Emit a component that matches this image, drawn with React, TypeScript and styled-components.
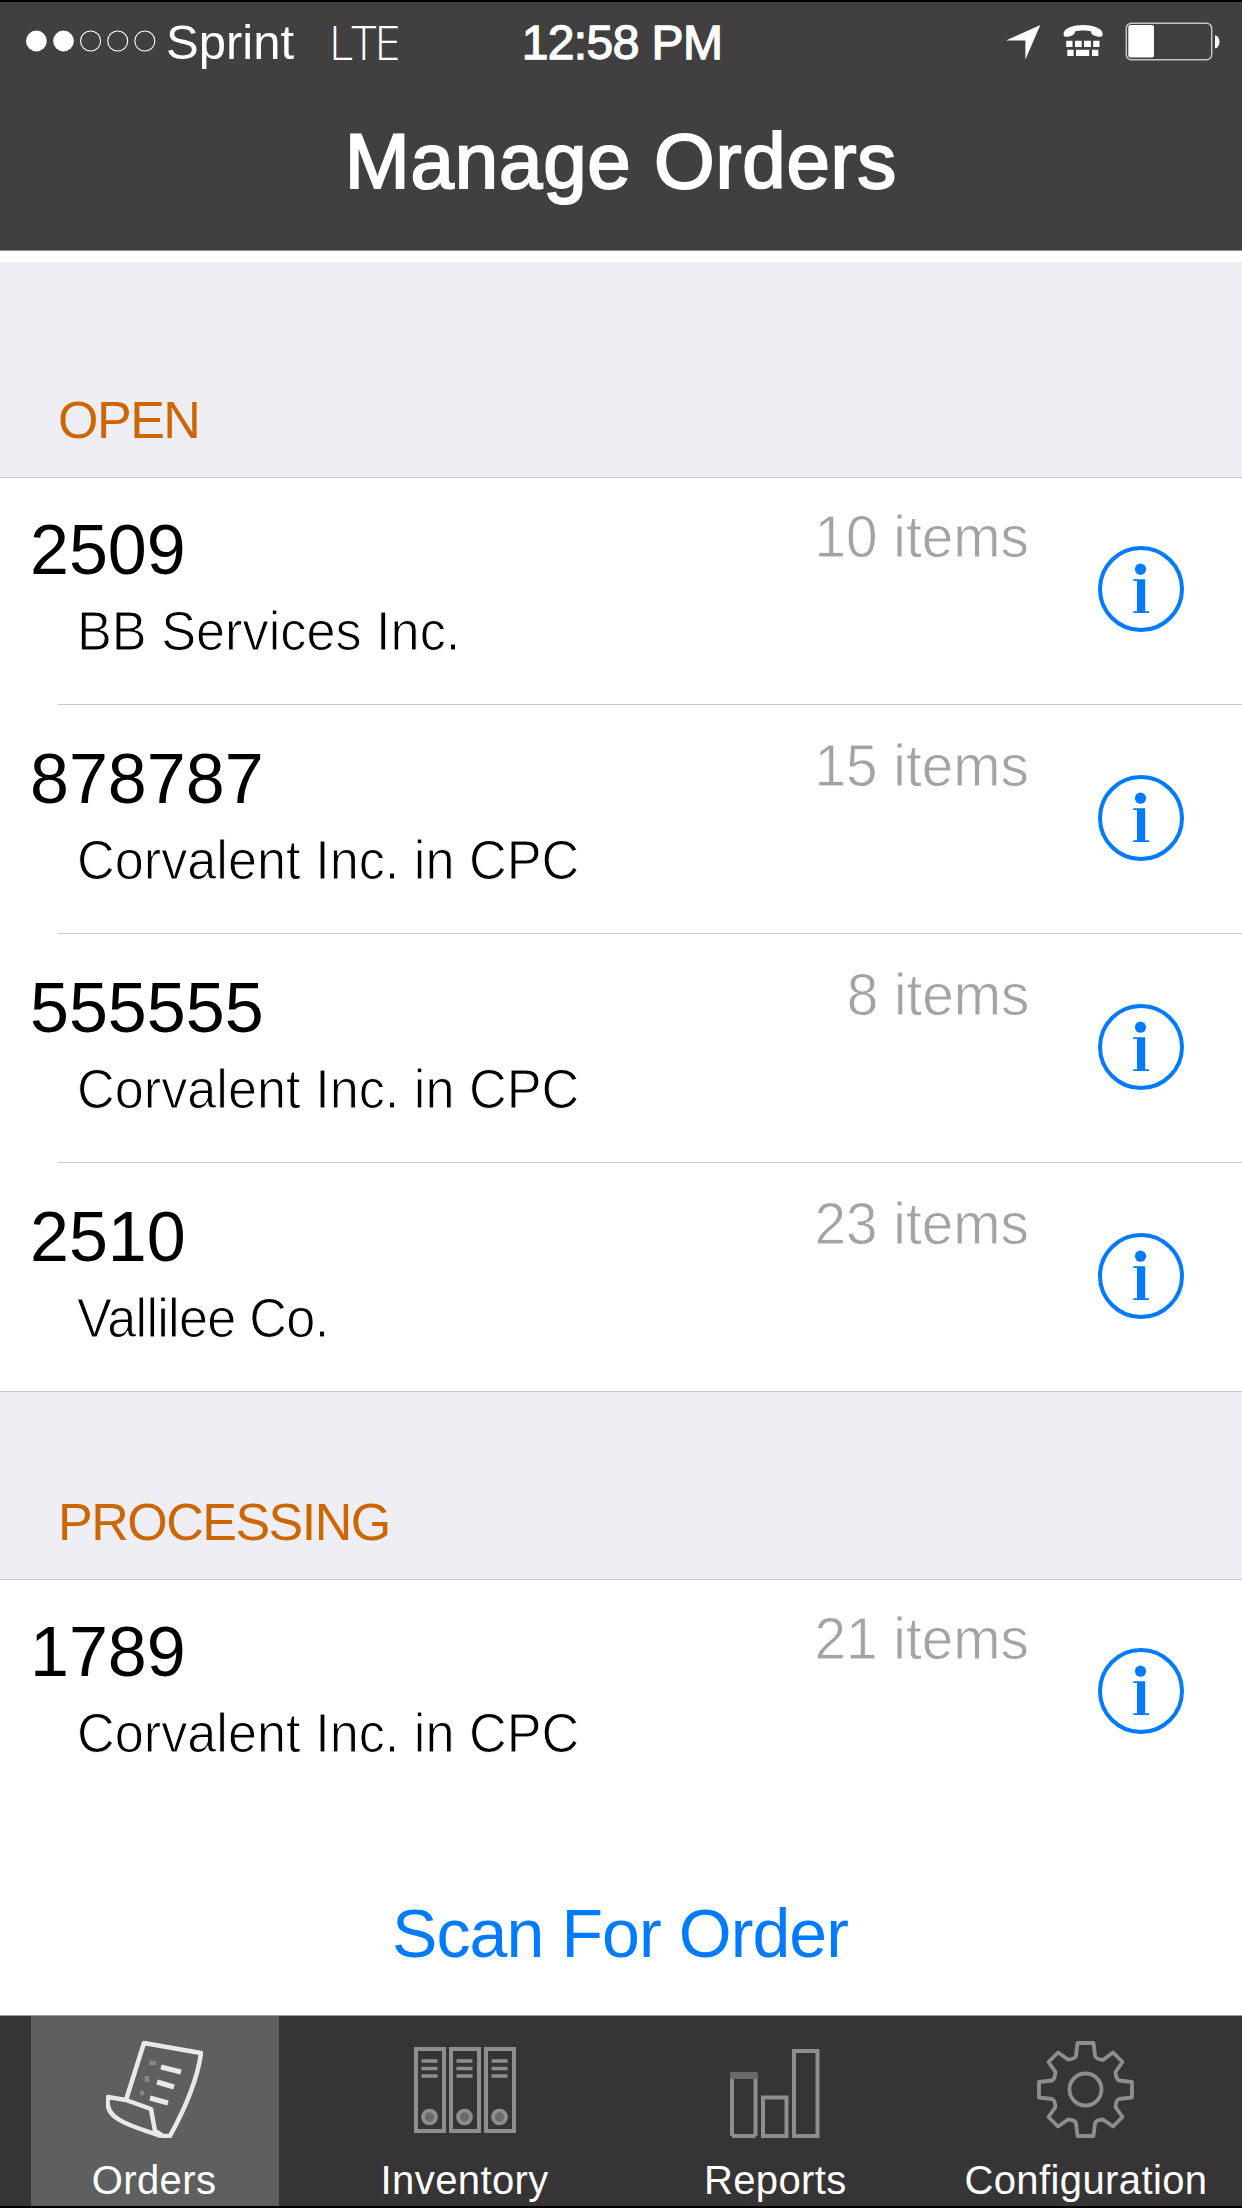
import React from "react";
import styled, { createGlobalStyle } from "styled-components";

const Global = createGlobalStyle`
  * { box-sizing: border-box; }
  body { margin: 0; background: #fff; font-family: "Liberation Sans", Arial, sans-serif; font-variant-ligatures: none; }
`;

const Screen = styled.div`
  width: 1242px;
  height: 2208px;
  display: flex;
  flex-direction: column;
  background: #fff;
  overflow: hidden;
`;

const Header = styled.header`
  height: 251px;
  flex: none;
  background: #413f40;
  border-top: 2px solid #000;
  border-bottom: 1px solid #8e8d8d;
  color: #fff;
`;

const StatusBar = styled.div`
  height: 78px;
  display: grid;
  grid-template-columns: 1fr auto 1fr;
  align-items: center;
  padding: 0 22px 0 24px;
`;

const StatusGroup = styled.div<{ $end?: boolean }>`
  display: flex;
  align-items: center;
  justify-content: ${(p) => (p.$end ? "flex-end" : "flex-start")};
`;

const Carrier = styled.span`
  font-size: 49px;
  line-height: 56px;
  margin-left: 10px;
  padding-top: 2px;
`;

const Network = styled.span`
  font-family: "Open Sans", sans-serif;
  font-weight: 300;
  font-size: 47px;
  line-height: 56px;
  letter-spacing: -1.6px;
  margin-left: 35px;
  padding-top: 2px;
`;

const Clock = styled.span`
  font-size: 48px;
  line-height: 56px;
  letter-spacing: -0.6px;
  padding-top: 3px;
  -webkit-text-stroke: 1.3px #fff;
`;

const Title = styled.h1`
  margin: 36px 0 0;
  font-size: 78px;
  line-height: 90px;
  font-weight: 400;
  letter-spacing: 0.8px;
  text-align: center;
  -webkit-text-stroke: 2px #fff;
`;

const List = styled.main`
  flex: 1;
  padding-top: 11px;
`;

const SectionHeader = styled.h2<{ $height: number }>`
  margin: 0;
  height: ${(p) => p.$height}px;
  display: flex;
  align-items: flex-end;
  padding: 0 58px 27px;
  background: #efeef4;
  border-bottom: 1px solid #c8c7cc;
  color: #cc6600;
  font-size: 52px;
  line-height: 60px;
  font-weight: 400;
  letter-spacing: -1.5px;
`;

const Row = styled.div<{ $first?: boolean }>`
  height: ${(p) => (p.$first ? 227 : 229)}px;
  display: flex;
  justify-content: space-between;
  padding: ${(p) => (p.$first ? 29 : 31)}px 57px 0 30px;
`;

const Divider = styled.hr<{ $inset?: boolean }>`
  height: 1px;
  border: 0;
  margin: -1px 0 0 ${(p) => (p.$inset ? 58 : 0)}px;
  background: #c8c7cc;
`;

const OrderText = styled.div`
  display: flex;
  flex-direction: column;
  padding-top: 2px;
`;

const OrderNumber = styled.div`
  font-size: 70px;
  line-height: 82px;
  color: #000;
`;

const Customer = styled.div<{ $tracking?: number }>`
  margin-top: 2px;
  padding-left: 47px;
  font-size: 56px;
  line-height: 76px;
  letter-spacing: ${(p) => p.$tracking ?? 0}px;
  white-space: nowrap;
  transform: scaleX(0.933);
  transform-origin: 47px 0;
  color: #000;
  -webkit-text-stroke: 1px #fff;
`;

const RowEnd = styled.div`
  display: flex;
  gap: 69px;
`;

const ItemCount = styled.div`
  font-size: 60px;
  line-height: 60px;
  transform: scaleX(0.945);
  transform-origin: right top;
  color: #a3a3a3;
  -webkit-text-stroke: 0.8px #fff;
`;

const InfoButton = styled.button`
  width: 87px;
  height: 87px;
  margin-top: 39px;
  padding: 0;
  border: 0;
  background: none;
  svg { display: block; }
`;

const ScanButton = styled.button`
  flex: none;
  height: 160px;
  border: 0;
  padding: 0 2px 5px 0;
  background: #fff;
  color: #007aff;
  font: 400 68px/76px "Liberation Sans", Arial, sans-serif;
  letter-spacing: -0.9px;
`;

const TabBar = styled.nav`
  flex: none;
  height: 193px;
  display: flex;
  justify-content: space-between;
  padding: 0 31px;
  background: #363435;
  border-top: 1px solid #9a9b9b;
  border-bottom: 2px solid #000;
`;

const Tab = styled.div<{ $active?: boolean }>`
  width: 248px;
  display: flex;
  flex-direction: column;
  align-items: center;
  padding: 25px 2px 0 0;
  background: ${(p) => (p.$active ? "#5f5f5f" : "transparent")};
  color: ${(p) => (p.$active ? "#e9e9e9" : "#8e8e8e")};
  svg { display: block; }
`;

const TabLabel = styled.span`
  margin-top: 19px;
  font-size: 40px;
  line-height: 46px;
  letter-spacing: 0.4px;
  color: #fff;
`;

const SignalDots = () => (
  <svg width="132" height="24" viewBox="0 0 132 24" fill="none" stroke="#fff">
    {[0, 1, 2, 3, 4].map((i) => (
      <circle key={i} cx={12.4 + i * 27.1} cy="12" r={i < 2 ? 10.4 : 10} fill={i < 2 ? "#fff" : "none"} strokeWidth={i < 2 ? 0 : 1.1} />
    ))}
  </svg>
);

const StatusIcons = () => (
  <svg width="216" height="44" viewBox="1004 19 216 44" fill="#fff">
    <path d="M1040.300 25 1025.400 59.500V40.600L1006 40.400Z" />
    <path d="M1063.500 34C1063.500 28 1074 25 1083 25S1102.700 28 1102.700 34C1102.700 37 1100 37.300 1096.500 36.200 1093 35.200 1091.300 34.500 1091 31.400 1087 30.300 1079 30.300 1075 31.400 1074.700 34.500 1073 35.200 1069.700 36.200 1066 37.300 1063.500 37 1063.500 34Z" />
    <path d="M1066.200 40.700h6.300v6.300h-6.300zM1075 40.700h6.700v6.300h-6.700zM1084 40.700h6.900v6.300h-6.900zM1093.200 40.700h6.300v6.300h-6.300zM1067.300 49.700h6.300v6.300h-6.300zM1076 49.700h13.200v6.300h-13.200zM1092 49.700h6.300v6.300h-6.300z" />
    <rect x="1126.300" y="23.200" width="85.400" height="36.500" rx="5" fill="none" stroke="#c6c5c5" strokeWidth="1.500" />
    <rect x="1128.300" y="25" width="25.700" height="32.500" rx="2" />
    <path d="M1215 35.300c6 1.500 6 11.700 0 13.200z" />
  </svg>
);

const InfoIcon = () => (
  <svg width="87" height="87" viewBox="0 0 87 87" fill="#007aff">
    <circle cx="43" cy="43" r="41" fill="none" stroke="#007aff" strokeWidth="4" />
    <circle cx="42.500" cy="23.200" r="5.600" />
    <path d="M35.300 33.300H47.200V65.300H51V67H35.300V65.300H39V35H35.300Z" />
  </svg>
);

const OrdersIcon = () => (
  <svg width="97" height="97" viewBox="0 0 97 97" fill="none" stroke="currentColor" strokeWidth="4.500" strokeLinejoin="round">
    <path d="M20 59 38 2 95 12C91 42 76 73 64 95H55M20 59 2 56C0 66 4 73 12 78 24 86 42 90 55 95M20 59 45 68 49 90 57 95" />
    <path d="M55 26 75 31M51 41 68 46M44 57 62 62" strokeWidth="5" />
    <path d="M43 22h7M41 35v6M34 52h4" opacity=".28" />
  </svg>
);

const InventoryIcon = () => (
  <svg width="104" height="97" viewBox="0 0 104 97" fill="none" stroke="currentColor" strokeWidth="4">
    {[0, 35, 70].map((x) => (
      <g key={x} transform={`translate(${x} 0)`}>
        <rect x="3" y="8" width="28" height="82" />
        <path d="M8.500 20h16M8.500 27.500h16M8.500 35h16" strokeWidth="3.700" />
        <circle cx="16.500" cy="76" r="6.500" fill="#6b6a6a" strokeWidth="3.700" />
      </g>
    ))}
  </svg>
);

const ReportsIcon = () => (
  <svg width="92" height="97" viewBox="0 0 92 97" fill="none" stroke="currentColor" strokeWidth="4">
    <path d="M3 95V35M26.500 35V95M3 95H26.500M34 95V56.500H57.500V95ZM65 95V10H88.500V95Z" />
    <path d="M1 34.500H28.500" stroke="#6b6a6a" strokeWidth="7" />
  </svg>
);

const GearIcon = () => (
  <svg width="97" height="97" viewBox="0 0 97 97" fill="none" stroke="currentColor" strokeWidth="3.800" strokeLinejoin="round">
    <circle cx="48.500" cy="48.500" r="16" />
    <path d="M40.500 2H56.500L58 15Q59 18 66 19L76 11.500 85.500 21 78.500 31Q79 38 82 39.500L95 41V56.500L82 58Q79 59 78.500 66L85.500 76 76 85.500 66 78.500Q59 79 58 82L56.500 95H40.500L39 82Q38 79 31 78.500L21 85.500 11.500 76 18.500 66Q18 59 15 58L2 56.500V41L15 39.500Q18 38 18.500 31L11.500 21 21 11.500 31 18.500Q38 18 39 15Z" />
  </svg>
);

type Order = { id: string; customer: string; items: number; tracking?: number };

const sections: { title: string; height: number; orders: Order[] }[] = [
  {
    title: "OPEN",
    height: 216,
    orders: [
      { id: "2509", customer: "BB Services Inc.", items: 10 },
      { id: "878787", customer: "Corvalent Inc. in CPC", items: 15 },
      { id: "555555", customer: "Corvalent Inc. in CPC", items: 8 },
      { id: "2510", customer: "Vallilee Co.", items: 23, tracking: -0.8 },
    ],
  },
  {
    title: "PROCESSING",
    height: 188,
    orders: [{ id: "1789", customer: "Corvalent Inc. in CPC", items: 21 }],
  },
];

const tabs = [
  { label: "Orders", Icon: OrdersIcon },
  { label: "Inventory", Icon: InventoryIcon },
  { label: "Reports", Icon: ReportsIcon },
  { label: "Configuration", Icon: GearIcon },
];

export default function App() {
  return (
    <Screen>
      <Global />
      <Header>
        <StatusBar>
          <StatusGroup>
            <SignalDots />
            <Carrier>Sprint</Carrier>
            <Network>LTE</Network>
          </StatusGroup>
          <Clock>12:58 PM</Clock>
          <StatusGroup $end>
            <StatusIcons />
          </StatusGroup>
        </StatusBar>
        <Title>Manage Orders</Title>
      </Header>
      <List>
        {sections.map((section, s) => (
          <section key={section.title}>
            <SectionHeader $height={section.height}>{section.title}</SectionHeader>
            {section.orders.map((order, i) => {
              const last = i === section.orders.length - 1;
              return (
                <React.Fragment key={order.id}>
                  <Row $first={i === 0}>
                    <OrderText>
                      <OrderNumber>{order.id}</OrderNumber>
                      <Customer $tracking={order.tracking}>{order.customer}</Customer>
                    </OrderText>
                    <RowEnd>
                      <ItemCount>{order.items} items</ItemCount>
                      <InfoButton aria-label="Order details">
                        <InfoIcon />
                      </InfoButton>
                    </RowEnd>
                  </Row>
                  {(!last || s < sections.length - 1) && <Divider $inset={!last} />}
                </React.Fragment>
              );
            })}
          </section>
        ))}
      </List>
      <ScanButton>Scan For Order</ScanButton>
      <TabBar>
        {tabs.map(({ label, Icon }, i) => (
          <Tab key={label} $active={i === 0}>
            <Icon />
            <TabLabel>{label}</TabLabel>
          </Tab>
        ))}
      </TabBar>
    </Screen>
  );
}
